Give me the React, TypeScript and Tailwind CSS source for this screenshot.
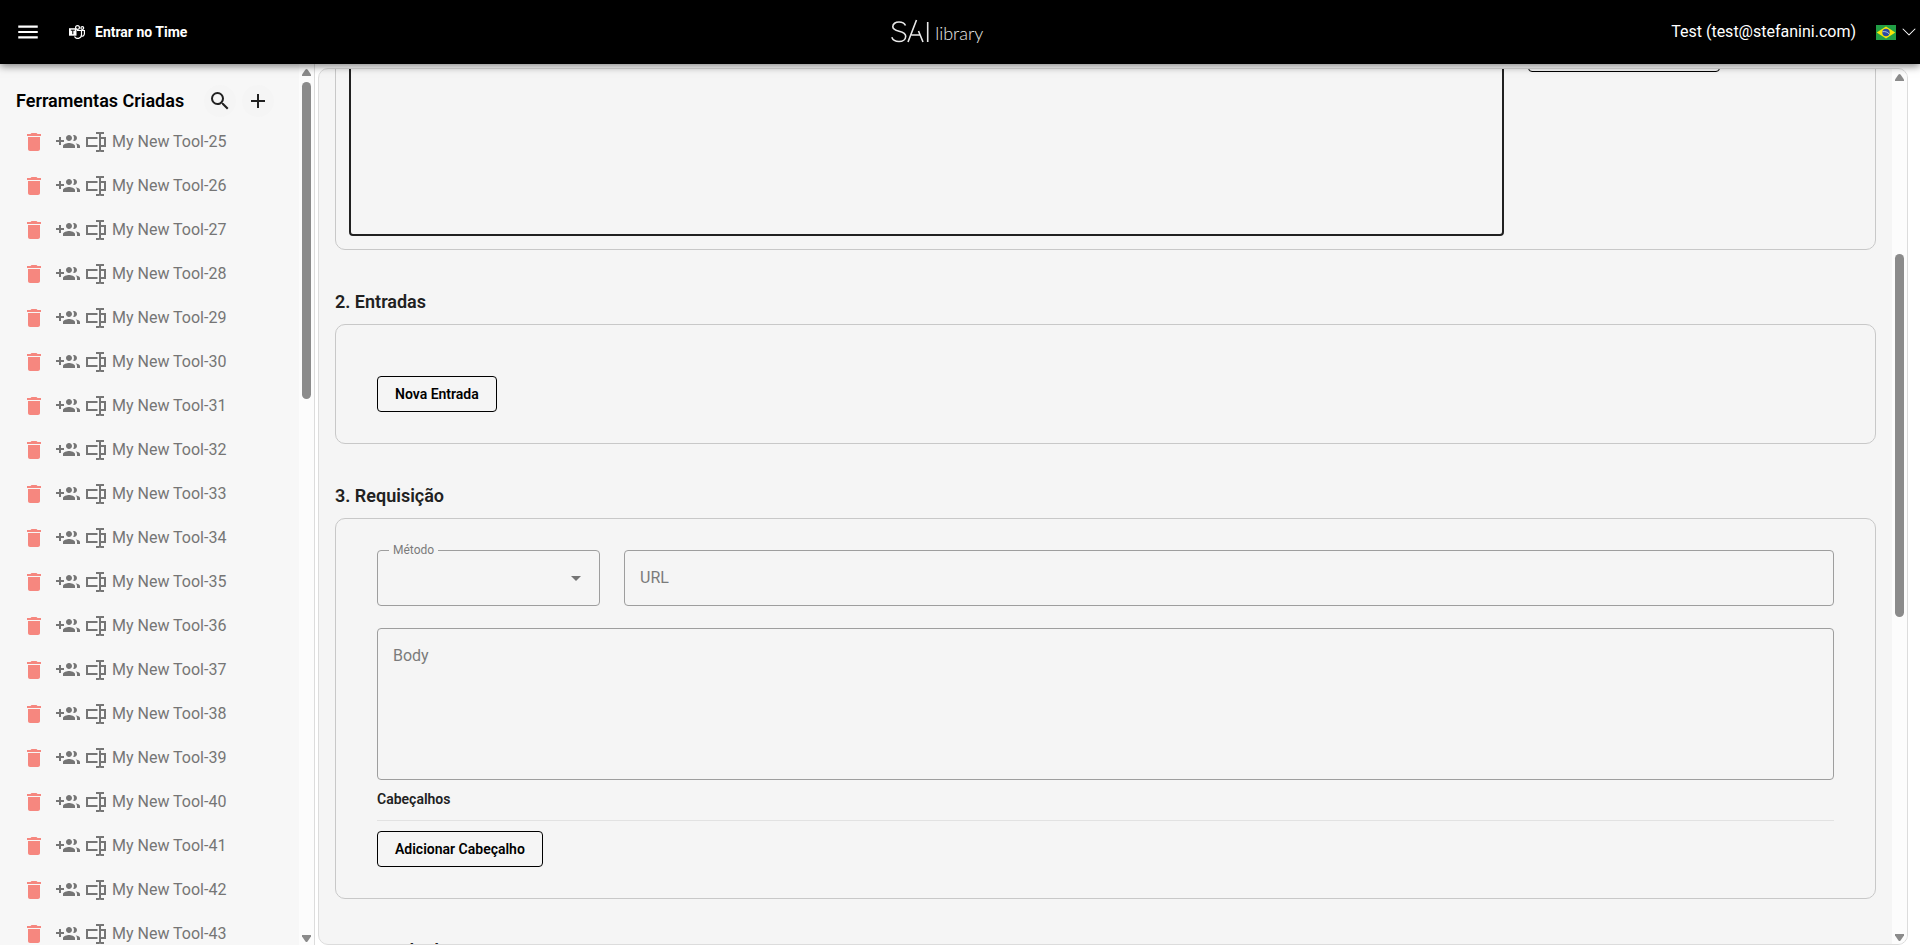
import React, { type FC, type ReactNode } from 'react';
import { BsChevronDown } from 'react-icons/bs';
import { MdAdd, MdArrowDropDown, MdDelete, MdMenu, MdSearch } from 'react-icons/md';

const TOOLS = Array.from({ length: 19 }, (_, index) => `My New Tool-${index + 25}`);

const Logo: FC = () => (
  <a href="#" aria-label="SAI library" className="flex items-end text-[#e8e8e8]">
    <svg width="40" height="26" viewBox="0 0 40 26" fill="none" stroke="currentColor" strokeWidth="1.6">
      <path d="M14.5 6.5C13.5 4.2 11 3 8 3 4.5 3 1.8 4.8 1.8 7.7c0 6 12.9 3 12.9 9.5 0 3.2-3 5.3-6.7 5.3-3.5 0-6.2-1.6-7.2-4.3" />
      <path d="M17 23 25.5 1M20.5 16h8.5M27.5 12l4.5 11" />
      <path d="M36.7 3v20" />
    </svg>
    <span className="ml-1 font-[Lato] text-lg leading-6 font-light">library</span>
  </a>
);

const TeamsIcon: FC = () => (
  <svg width="16" height="14" viewBox="0 0 16 14" fill="none" stroke="currentColor" aria-hidden="true">
    <circle cx="8.5" cy="2.5" r="1.9" strokeWidth="1.2" />
    <circle cx="13.3" cy="3" r="1.4" strokeWidth="1.2" />
    <path
      d="M8 5.5h4.5v4.3a3.7 3.7 0 0 1-7 1.6M12.5 5.5h2.900v3.300a2.500 2.500 0 0 1-3 2.400"
      strokeWidth="1.2"
    />
    <path d="M0 3.200h7.500v7.500H0z" fill="currentColor" stroke="none" />
    <path d="M1.800 5.200h4M3.800 5.200v4" stroke="#000" />
  </svg>
);

const GroupAddIcon: FC = () => (
  <svg width="24" height="24" viewBox="0 0 24 24" fill="currentColor" aria-hidden="true">
    <path d="M8 10H5V7H3v3H0v2h3v3h2v-3h3v-2zm10 1c1.660 0 2.990-1.340 2.990-3S19.660 5 18 5c-.32 0-.63.05-.91.14.57.81.9 1.790.9 2.860s-.34 2.040-.9 2.860c.28.09.59.14.91.14zm-5 0c1.660 0 2.990-1.340 2.990-3S14.660 5 13 5c-1.660 0-3 1.340-3 3s1.340 3 3 3zm6.620 2.160c.83.73 1.380 1.660 1.380 2.840v2h3v-2c0-1.540-2.370-2.490-4.380-2.840zM13 13c-2 0-6 1-6 3v2h12v-2c0-2-4-3-6-3z" />
  </svg>
);

const RenameIcon: FC = () => (
  <svg width="20" height="20" viewBox="0 0 20 20" fill="none" stroke="currentColor" strokeWidth="2" aria-hidden="true">
    <path d="M11.500 6H1v8h10.500M15 6h4v8h-4" />
    <path d="M10 1h3l1 .7 1-.7h3M10 19h3l1-.7 1 .7h3M14 1.500v17" />
  </svg>
);

const BrazilFlag: FC = () => (
  <svg width="20" height="15" viewBox="0 0 20 15" aria-hidden="true">
    <path fill="#229e45" d="M0 0h20v15H0z" />
    <path fill="#f8e509" d="m10 13.500 9.300-6L10 1.500.7 7.500z" />
    <circle cx="10" cy="7.500" r="3.700" fill="#2b49a3" />
    <path d="M6.600 6.700c2.500-.5 5 .3 6.600 2.300" stroke="#e8edf5" strokeWidth=".7" fill="none" />
  </svg>
);

type ScrollbarProps = {
  thumbClassName: string;
};

const Scrollbar: FC<ScrollbarProps> = ({ thumbClassName }) => (
  <div className="flex w-[15px] shrink-0 flex-col items-center bg-[#fcfcfc] pt-[5px] pb-[3px]" aria-hidden="true">
    <svg width="9" height="7" viewBox="0 0 9 7" className="shrink-0" fill="#8b8b8b">
      <path d="M3.500.5q1-1 2 0L9 5.500V7H0V5.500z" />
    </svg>
    <div className="flex min-h-0 grow flex-col pt-[6px]">
      <div className={`w-[9px] rounded-full bg-[#8b8b8b] ${thumbClassName}`} />
    </div>
    <svg width="9" height="7" viewBox="0 0 9 7" className="shrink-0" fill="#8b8b8b">
      <path d="M3.500 6.500q1 1 2 0L9 1.500V0H0v1.500z" />
    </svg>
  </div>
);

const Header: FC = () => (
  <header className="z-10 flex h-16 shrink-0 items-center justify-between bg-black text-white shadow-[0_2px_8px_rgba(0,0,0,0.5)]">
    <div className="flex items-center pl-[15px]">
      <button type="button" aria-label="Menu">
        <MdMenu size={26} />
      </button>
      <button type="button" className="ml-7 flex items-center gap-[10px] pr-4 text-sm font-bold">
        <TeamsIcon />
        Entrar no Time
      </button>
    </div>
    <Logo />
    <div className="flex items-center pr-[3px]">
      <span className="text-base">Test (test@stefanini.com)</span>
      <button type="button" aria-label="Idioma" className="ml-5 flex items-center gap-[5px]">
        <BrazilFlag />
        <BsChevronDown size={16} />
      </button>
    </div>
  </header>
);

const Sidebar: FC = () => (
  <aside className="flex w-[315px] shrink-0 border-r border-[#dcdcdc] bg-[#f7f7f7]">
    <div className="min-w-0 grow overflow-hidden">
      <div className="flex items-center pt-[21px] pl-4">
        <h2 className="text-lg font-semibold text-black">Ferramentas Criadas</h2>
        <button
          type="button"
          aria-label="Buscar"
          className="ml-5 flex size-8 items-center justify-center rounded-full bg-[#f5f5f5] text-[#212121]"
        >
          <MdSearch size={24} />
        </button>
        <button
          type="button"
          aria-label="Adicionar"
          className="ml-[6px] flex size-8 items-center justify-center rounded-full bg-[#f5f5f5] text-[#212121]"
        >
          <MdAdd size={24} />
        </button>
      </div>
      <ul className="mt-[3px]">
        {TOOLS.map((tool) => (
          <li key={tool} className="flex h-11 items-center pl-[22px] text-[#757575]">
            <button type="button" aria-label="Excluir" className="text-[#f6877f]">
              <MdDelete size={24} />
            </button>
            <button type="button" aria-label="Compartilhar" className="ml-[10px]">
              <GroupAddIcon />
            </button>
            <button type="button" aria-label="Renomear" className="ml-[6px]">
              <RenameIcon />
            </button>
            <a href="#" className="ml-[6px] text-base">
              {tool}
            </a>
          </li>
        ))}
      </ul>
    </div>
    <Scrollbar thumbClassName="h-[317px]" />
  </aside>
);

type OutlinedButtonProps = {
  children?: ReactNode;
  className?: string;
  label?: string;
};

const OutlinedButton: FC<OutlinedButtonProps> = ({ children, className = '', label }) => (
  <button
    type="button"
    aria-label={label}
    className={`h-9 rounded border border-black px-[17px] text-sm font-semibold text-black ${className}`}
  >
    {children}
  </button>
);

const SectionTitle: FC<{ children: ReactNode }> = ({ children }) => (
  <h3 className="mt-[38px] mb-2 text-lg leading-7 font-semibold text-[#212121]">{children}</h3>
);

const App: FC = () => (
  <div className="flex h-screen flex-col overflow-hidden bg-white font-[Roboto,sans-serif]">
    <Header />
    <div className="flex min-h-0 grow">
      <Sidebar />
      <main className="mt-1 mr-3 ml-[3px] flex min-w-0 grow overflow-hidden rounded-[10px] border border-[#dcdcdc] bg-[#f5f5f5]">
        <div className="min-w-0 grow overflow-hidden px-4">
          <section className="-mt-[47px] flex rounded-[10px] border border-[#c8c8c8] p-[13px]">
            <textarea
              aria-label="Template"
              className="h-[200px] min-w-0 grow resize-none rounded border-2 border-[#212121] p-3 outline-none"
            />
            <div className="w-[358px] shrink-0 pl-6">
              <OutlinedButton className="w-[192px]" label="Gerar" />
            </div>
          </section>

          <SectionTitle>2. Entradas</SectionTitle>
          <section className="rounded-[10px] border border-[#c8c8c8] px-[41px] pt-[51px] pb-[31px]">
            <OutlinedButton className="block">Nova Entrada</OutlinedButton>
          </section>

          <SectionTitle>3. Requisição</SectionTitle>
          <section className="rounded-[10px] border border-[#c8c8c8] px-[41px] pt-[31px] pb-[31px]">
            <div className="flex gap-6">
              <div className="relative h-14 w-[223px] shrink-0">
                <label
                  htmlFor="method"
                  className="absolute -top-2 left-3 bg-[#f5f5f5] px-1 text-xs leading-4 text-[#7b7b7b]"
                >
                  Método
                </label>
                <select
                  id="method"
                  defaultValue=""
                  className="size-full appearance-none rounded border border-[#9e9e9e] px-4 outline-none"
                >
                  <option value="" />
                </select>
                <MdArrowDropDown size={24} className="pointer-events-none absolute top-4 right-3 text-[#757575]" />
              </div>
              <input
                type="text"
                aria-label="URL"
                placeholder="URL"
                className="h-14 min-w-0 grow rounded border border-[#9e9e9e] px-[15px] pb-[2px] text-base outline-none placeholder:text-[#7b7b7b]"
              />
            </div>
            <textarea
              aria-label="Body"
              placeholder="Body"
              className="mt-[22px] block h-[152px] w-full resize-none rounded border border-[#9e9e9e] px-[15px] py-[15px] text-base outline-none placeholder:text-[#7b7b7b]"
            />
            <h4 className="mt-[9px] border-b border-[#e2e2e2] pb-[11px] text-sm font-semibold text-[#212121]">
              Cabeçalhos
            </h4>
            <OutlinedButton className="mt-[10px] block">Adicionar Cabeçalho</OutlinedButton>
          </section>

          <SectionTitle>4. Exemplo de Resposta</SectionTitle>
        </div>
        <Scrollbar thumbClassName="mt-[167px] h-[363px]" />
      </main>
    </div>
  </div>
);

export default App;
